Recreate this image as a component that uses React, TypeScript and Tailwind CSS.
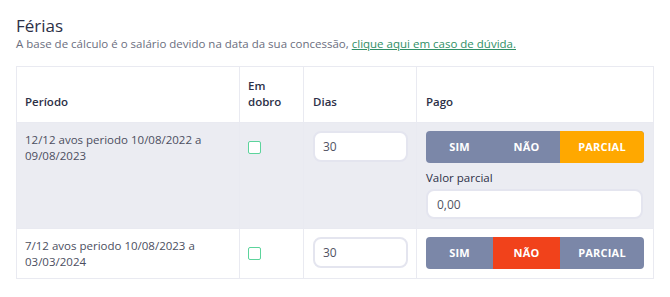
import { useState } from 'react';

type Pago = 'sim' | 'nao' | 'parcial';

interface Periodo {
  label: string[];
  dias: string;
  pago: Pago;
}

const periodos: Periodo[] = [
  { label: ['12/12 avos periodo 10/08/2022 a', '09/08/2023'], dias: '30', pago: 'parcial' },
  { label: ['7/12 avos periodo 10/08/2023 a', '03/03/2024'], dias: '30', pago: 'nao' },
];

function PagoToggle({ value, onChange }: { value: Pago; onChange: (v: Pago) => void }) {
  const base = 'flex h-full items-center justify-center text-[11px] font-bold tracking-[0.2px] text-white';
  return (
    <div className="flex h-[32px] w-[218px] overflow-hidden rounded-[4px] bg-[#7b87a8]">
      <button type="button" onClick={() => onChange('sim')} className={`${base} w-[67px] ${value === 'sim' ? 'bg-[#3fb37f]' : ''}`}>
        SIM
      </button>
      <button type="button" onClick={() => onChange('nao')} className={`${base} w-[67px] ${value === 'nao' ? 'bg-[#f1421b]' : ''}`}>
        NÃO
      </button>
      <button type="button" onClick={() => onChange('parcial')} className={`${base} flex-1 ${value === 'parcial' ? 'bg-[#ffa800]' : ''}`}>
        PARCIAL
      </button>
    </div>
  );
}

function Row({ periodo }: { periodo: Periodo }) {
  const [pago, setPago] = useState<Pago>(periodo.pago);
  const parcial = pago === 'parcial';

  return (
    <tr className={`align-top ${parcial ? 'bg-[#ebecf2]' : 'bg-white'}`}>
      <td className="border border-[#e9eaf1] px-[8px] pt-[9px] pb-[8px] text-[11.5px] leading-[16px] text-[#4b4e60]">
        {periodo.label.map((line) => (
          <div key={line}>{line}</div>
        ))}
      </td>
      <td className="border border-[#e9eaf1] px-[8px] pt-[18px]">
        <div className="h-[13px] w-[13px] rounded-[2px] border-[1.5px] border-[#5cd49c] bg-white" />
      </td>
      <td className="border border-[#e9eaf1] px-[9px] pt-[8px]">
        <input
          defaultValue={periodo.dias}
          className="h-[31px] w-[95px] rounded-[8px] border-2 border-[#e4e5ef] bg-white px-[8px] text-[12px] text-[#505363] outline-none"
        />
      </td>
      <td className="border border-[#e9eaf1] px-[9px] pt-[8px] pb-[9px]">
        <PagoToggle value={pago} onChange={setPago} />
        {parcial && (
          <div className="mt-[7px]">
            <div className="text-[11.5px] leading-[16px] text-[#2d3047]">Valor parcial</div>
            <input
              defaultValue="0,00"
              className="mt-[3px] h-[30px] w-[217px] rounded-[8px] border-2 border-[#e4e5ef] bg-white px-[9px] text-[12px] text-[#505363] outline-none"
            />
          </div>
        )}
      </td>
    </tr>
  );
}

export default function App() {
  return (
    <div className="min-h-[297px] bg-white px-[16px] pt-[14px] font-['Open_Sans',sans-serif]">
      <h2 className="text-[17px] leading-[23px] text-[#2d3047]">Férias</h2>
      <p className="text-[11.5px] leading-[14px] text-[#6b6e7e]">
        A base de cálculo é o salário devido na data da sua concessão,{' '}
        <a href="#" className="text-[#2f8f66] underline">
          clique aqui em caso de dúvida.
        </a>
      </p>

      <table className="mt-[15px] w-[638px] table-fixed border-collapse">
        <colgroup>
          <col className="w-[223px]" />
          <col className="w-[64px]" />
          <col className="w-[113px]" />
          <col />
        </colgroup>
        <thead>
          <tr className="h-[56px] align-bottom text-left text-[11.5px] font-semibold leading-[16px] text-[#2d3047]">
            <th className="border border-[#e9eaf1] px-[8px] pb-[12px] font-semibold">Período</th>
            <th className="border border-[#e9eaf1] px-[8px] pb-[12px] font-semibold">
              Em
              <br />
              dobro
            </th>
            <th className="border border-[#e9eaf1] px-[9px] pb-[12px] font-semibold">Dias</th>
            <th className="border border-[#e9eaf1] px-[9px] pb-[12px] font-semibold">Pago</th>
          </tr>
        </thead>
        <tbody>
          {periodos.map((p) => (
            <Row key={p.label[0]} periodo={p} />
          ))}
        </tbody>
      </table>
    </div>
  );
}
